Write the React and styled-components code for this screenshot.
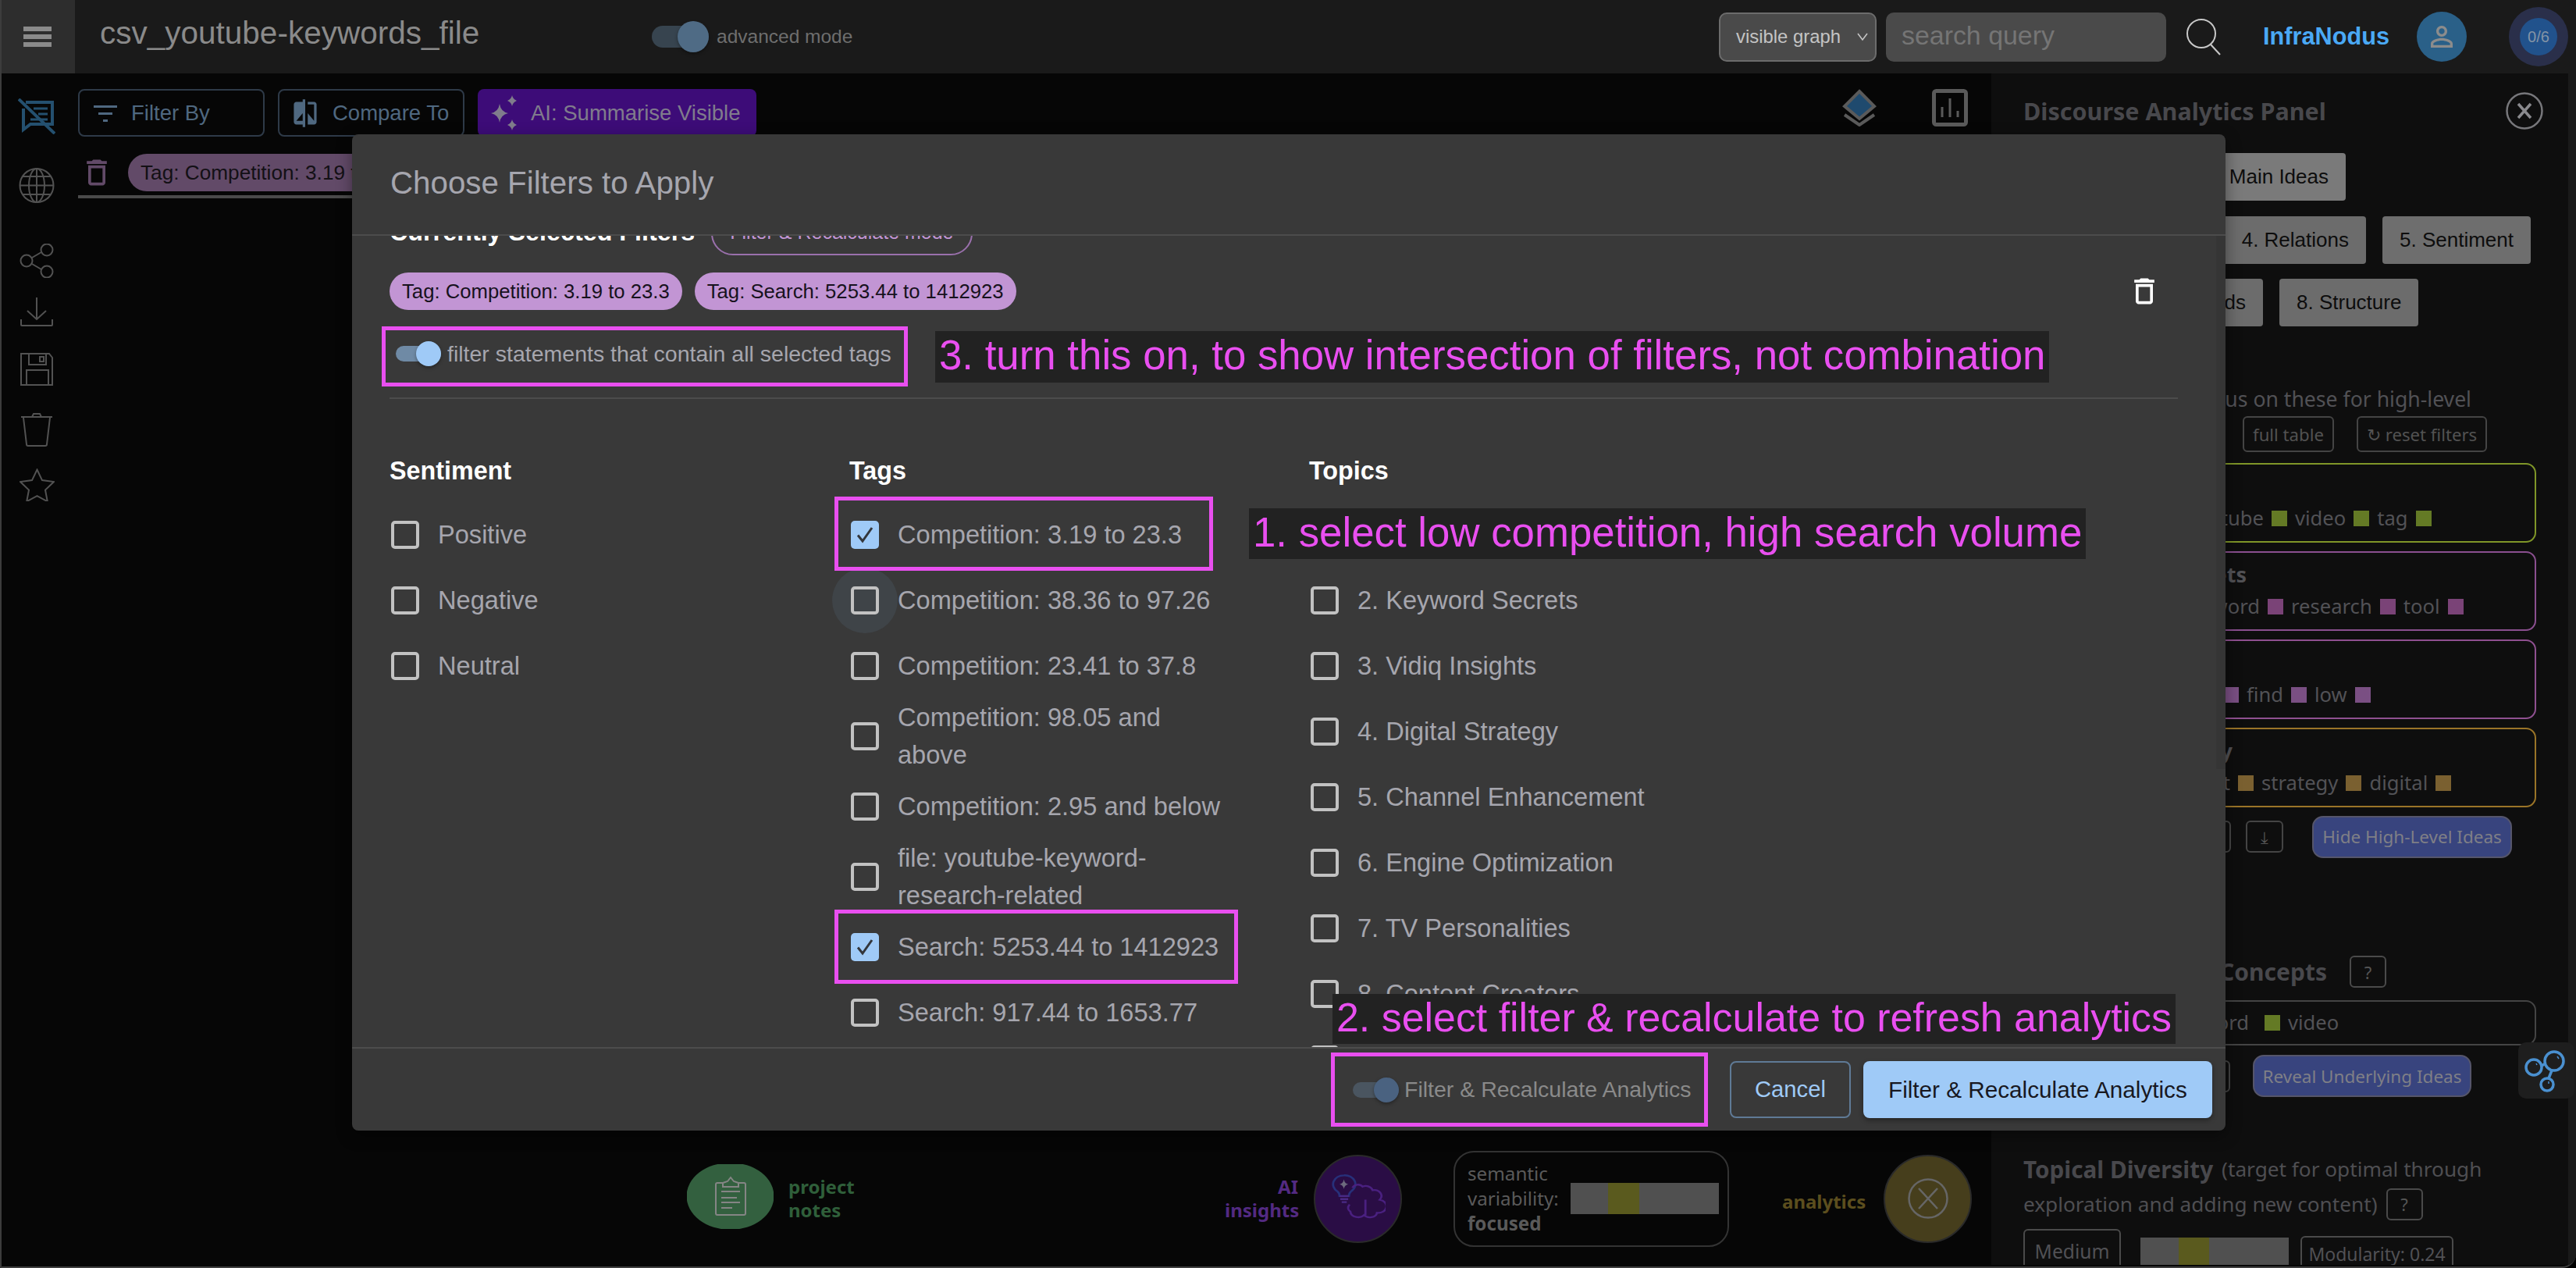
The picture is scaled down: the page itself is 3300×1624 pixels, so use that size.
import React from "react";
import styled, { createGlobalStyle } from "styled-components";

const Global = createGlobalStyle`
  html, body { margin: 0; padding: 0; background: #000; }
  * { box-sizing: border-box; }
`;

const SANS = `"Liberation Sans", Arial, sans-serif`;
const NOTO = `"Noto Sans", "Open Sans", sans-serif`;

const Root = styled.div`
  position: relative;
  width: 3300px;
  height: 1624px;
  overflow: hidden;
  background: #060606;
  border-left: 2px solid #3c3c3c;
  border-bottom: 2px solid #3f3f3f;
  border-bottom-right-radius: 18px;
  font-family: ${SANS};
`;

/* ---------- header ---------- */
const Header = styled.header`
  display: flex;
  align-items: center;
  height: 94px;
  background: #1a1a1a;
`;
const MenuCell = styled.div`
  display: flex;
  flex-direction: column;
  justify-content: center;
  gap: 4px;
  width: 94px;
  height: 94px;
  padding-left: 28px;
  background: #2d2d2d;
`;
const MenuBar = styled.span`
  display: block;
  width: 36px;
  height: 6px;
  background: #8a8a8a;
`;
const ProjectTitle = styled.div`
  margin: 0 0 10px 32px;
  width: 707px;
  font-size: 40.5px;
  line-height: 48px;
  color: #8a8a8a;
  white-space: nowrap;
`;
const Switch = styled.span`
  position: relative;
  display: inline-block;
  flex: none;
  width: ${p => p.$w}px;
  height: ${p => p.$h}px;
  border-radius: ${p => p.$h / 2}px;
  background: ${p => p.$track};
  &::after {
    content: "";
    position: absolute;
    right: 0;
    top: ${p => (p.$h - p.$size) / 2}px;
    width: ${p => p.$size}px;
    height: ${p => p.$size}px;
    border-radius: 50%;
    background: ${p => p.$thumb};
    box-shadow: 0 2px 4px rgba(0, 0, 0, 0.35);
  }
`;
const AdvancedLabel = styled.span`
  margin-left: 10px;
  font-size: 24.5px;
  color: #6e6e6e;
`;
const HeaderRight = styled.div`
  display: flex;
  align-items: center;
  margin-left: auto;
  padding-right: 10px;
`;
const GraphSelect = styled.div`
  display: flex;
  align-items: center;
  justify-content: space-between;
  width: 202px;
  height: 63px;
  padding: 0 8px 0 20px;
  border: 2px solid #6c6c6c;
  border-radius: 10px;
  background: #4a4a4a;
  font-size: 23.9px;
  color: #c4c4c4;
`;
const SearchBox = styled.div`
  display: flex;
  align-items: center;
  width: 359px;
  height: 63px;
  margin-left: 12px;
  padding: 0 0 4px 20px;
  border-radius: 10px;
  background: #4a4a4a;
  font-size: 33.9px;
  color: #757575;
`;
const SearchIcon = styled.svg`
  width: 46px;
  height: 48px;
  margin: 0 52px 0 26px;
`;
const Brand = styled.div`
  width: 197px;
  font-size: 30.7px;
  font-weight: 700;
  color: #4aa9f5;
`;
const UserBadge = styled.div`
  display: flex;
  align-items: center;
  justify-content: center;
  width: 64px;
  height: 64px;
  border-radius: 50%;
  background: #2a6088;
`;
const QuotaRing = styled.div`
  display: flex;
  align-items: center;
  justify-content: center;
  width: 76px;
  height: 76px;
  margin-left: 54px;
  border-radius: 50%;
  background: #2a2f4a;
`;
const QuotaDot = styled.div`
  display: flex;
  align-items: center;
  justify-content: center;
  width: 48px;
  height: 48px;
  border-radius: 50%;
  background: #21528c;
  font-size: 20px;
  color: #8494a6;
`;

/* ---------- page layout ---------- */
const Main = styled.main`
  display: flex;
  height: 1526px;
`;
const Rail = styled.nav`
  display: flex;
  flex-direction: column;
  align-items: center;
  flex: none;
  width: 90px;
  padding-top: 32px;
`;
const RailIcon = styled.svg`
  display: block;
  flex: none;
  width: ${p => p.$w}px;
  height: ${p => p.$h}px;
  margin-top: ${p => p.$mt}px;
  fill: none;
  stroke: ${p => p.$stroke || "#525252"};
  stroke-width: ${p => p.$sw || 2};
`;
const Center = styled.section`
  display: flex;
  flex-direction: column;
  flex: none;
  width: 2459px;
`;
const Toolbar = styled.div`
  display: flex;
  align-items: flex-start;
  padding: 20px 30px 0 8px;
  gap: 17px;
`;
const ToolButton = styled.div`
  display: flex;
  align-items: center;
  gap: 18px;
  width: ${p => p.$w}px;
  height: 61px;
  padding-left: ${p => p.$pad}px;
  border: 2px solid #2e3a48;
  border-radius: 8px;
  font-size: 27.5px;
  color: #4f6880;
`;
const AiButton = styled.div`
  display: flex;
  align-items: center;
  gap: 16px;
  width: 357px;
  height: 61px;
  padding-left: 16px;
  border-radius: 8px;
  background: #3d0c78;
  font-size: 27.5px;
  color: #807c8c;
`;
const ToolIcons = styled.div`
  display: flex;
  align-items: center;
  gap: 71px;
  margin-left: auto;
`;
const ChipRow = styled.div`
  display: flex;
  align-items: center;
  gap: 18px;
  height: 58px;
  margin: 21px 0 0 8px;
  padding: 0 0 4px 2px;
  border-bottom: 4px solid #4a4a4a;
`;
const DimChip = styled.span`
  display: flex;
  align-items: center;
  height: 48px;
  padding: 0 16px;
  border-radius: 24px;
  background: #624a68;
  font-size: 26.2px;
  color: #131015;
  white-space: nowrap;
`;
const Dock = styled.div`
  display: flex;
  align-items: center;
  height: 130px;
  margin-top: auto;
  margin-bottom: 20px;
  padding-left: 788px;
`;
const DockLabel = styled.div`
  width: ${p => p.$w}px;
  flex: none;
  margin-left: ${p => p.$ml || 0}px;
  margin-top: ${p => p.$mt || 0}px;
  font-family: ${NOTO};
  font-size: 24px;
  font-weight: 700;
  line-height: 30px;
  text-align: ${p => p.$align || "left"};
  color: ${p => p.$color};
`;
const NotesDisc = styled.div`
  display: flex;
  align-items: center;
  justify-content: center;
  flex: none;
  width: 111px;
  height: 83px;
  margin: 0 19px 6px 0;
  background: #33603f;
  clip-path: ellipse(56px 43px at center);
`;
const DockDisc = styled.div`
  display: flex;
  align-items: center;
  justify-content: center;
  flex: none;
  width: 113px;
  height: 113px;
  margin-left: ${p => p.$ml}px;
  border: 2px solid #2a2a2a;
  border-radius: 50%;
  background: ${p => p.$bg};
`;
const VariabilityCard = styled.div`
  display: flex;
  align-items: center;
  flex: none;
  width: 353px;
  height: 123px;
  margin: 0 68px 0 66px;
  padding: 0 11px 0 16px;
  border: 2px solid #333;
  border-radius: 26px;
`;
const VariabilityText = styled.div`
  width: 132px;
  flex: none;
  font-family: ${NOTO};
  font-size: 24.2px;
  line-height: 32px;
  color: #5a5a5a;
  & b { font-weight: 700; }
`;
const Meter = styled.div`
  display: flex;
  flex: none;
  width: 190px;
  height: 40px;
`;
const MeterSeg = styled.span`
  display: block;
  width: ${p => p.$w}px;
  background: ${p => p.$c};
`;

/* ---------- right panel ---------- */
const Panel = styled.aside`
  position: relative;
  flex: none;
  width: 739px;
  overflow: hidden;
  padding: 24px 0 0 41px;
  background: #0e0e0e;
  font-family: ${NOTO};
  color: #515155;
`;
const PanelEdge = styled.div`
  flex: 1;
  background: #1a1a1a;
`;
const PanelHead = styled.div`
  display: flex;
  align-items: center;
  justify-content: space-between;
  height: 48px;
  padding-right: 32px;
`;
const PanelTitle = styled.div`
  font-size: 30.5px;
  font-weight: 700;
  color: #48484c;
`;
const TabRow = styled.div`
  display: flex;
  gap: 21px;
  margin-top: ${p => p.$mt}px;
`;
const Tab = styled.div`
  display: flex;
  align-items: center;
  justify-content: flex-end;
  flex: none;
  width: ${p => (p.$w ? `${p.$w}px` : "auto")};
  height: 61px;
  padding: 0 22px;
  border-radius: 4px;
  background: ${p => p.$bg || "#6c6c6c"};
  font-family: ${SANS};
  font-size: 26px;
  color: #0d0d0d;
  white-space: nowrap;
`;
const IntroLine = styled.div`
  margin-top: 75px;
  height: 36px;
  font-size: 26.6px;
  line-height: 36px;
  text-align: right;
  width: 574px;
  white-space: nowrap;
`;
const SmallRow = styled.div`
  display: flex;
  gap: 29px;
  margin-top: 4px;
  padding-left: 281px;
`;
const SmallButton = styled.div`
  display: flex;
  align-items: center;
  height: 46px;
  padding: 0 11px;
  border: 2px solid #444;
  border-radius: 6px;
  font-size: 22.2px;
  color: #525252;
  white-space: nowrap;
`;
const Cards = styled.div`
  display: flex;
  flex-direction: column;
  gap: 11px;
  margin-top: 14px;
`;
const TopicCard = styled.div`
  width: 657px;
  height: 102px;
  padding: 10px 0 0 14px;
  border: 2px solid ${p => p.$c};
  border-radius: 13px;
`;
const TopicName = styled.div`
  width: ${p => p.$w}px;
  height: 41px;
  font-size: 27px;
  font-weight: 700;
  line-height: 36px;
  text-align: right;
  white-space: nowrap;
`;
const Words = styled.div`
  display: flex;
  align-items: center;
  gap: 10px;
  font-size: 25.6px;
  line-height: 36px;
  color: #525256;
`;
const LeadWord = styled.span`
  width: ${p => p.$w}px;
  flex: none;
  overflow: hidden;
  text-align: right;
  white-space: nowrap;
`;
const Sq = styled.span`
  display: block;
  flex: none;
  width: 20px;
  height: 20px;
  margin-left: ${p => p.$ml || 0}px;
  background: ${p => p.$c};
`;
const ActionRow = styled.div`
  display: flex;
  align-items: center;
  height: ${p => p.$h}px;
  margin-top: ${p => p.$mt}px;
`;
const Ghost = styled.div`
  display: flex;
  align-items: center;
  justify-content: center;
  flex: none;
  width: ${p => p.$w}px;
  height: 41px;
  margin-right: ${p => p.$mr}px;
  border: 2px solid #444;
  border-radius: 6px;
  font-size: 22px;
  color: #555;
`;
const RevealButton = styled.div`
  display: flex;
  align-items: center;
  justify-content: center;
  flex: none;
  width: ${p => p.$w}px;
  height: 54px;
  border: 2px solid #55556a;
  border-radius: 14px;
  background: #38447e;
  font-size: 22.5px;
  color: #7f7f86;
  white-space: nowrap;
`;
const ConceptHead = styled.div`
  display: flex;
  align-items: center;
  height: 41px;
  margin-top: 126px;
`;
const ConceptTitle = styled.div`
  width: 389px;
  margin-right: 29px;
  font-size: 30px;
  font-weight: 700;
  color: #48484c;
  white-space: nowrap;
  text-align: right;
`;
const HelpBox = styled.div`
  display: flex;
  align-items: center;
  justify-content: center;
  width: 47px;
  height: 41px;
  border: 2px solid #4a4a4a;
  border-radius: 6px;
  font-size: 22px;
  color: #555;
`;
const ConceptBox = styled.div`
  display: flex;
  align-items: center;
  width: 657px;
  height: 58px;
  margin-top: 16px;
  padding-left: 14px;
  border: 2px solid #444;
  border-radius: 13px;
`;
const Diversity = styled.div`
  margin-top: 70px;
  font-size: 26.2px;
  line-height: 45px;
  color: #4e4e52;
  white-space: nowrap;
`;
const DiversityLine = styled.div`
  display: flex;
  align-items: center;
  gap: 11px;
  & b { font-size: 29.7px; color: #48484c; }
`;
const MetricRow = styled.div`
  display: flex;
  align-items: flex-start;
  margin-top: 9px;
`;
const MediumTag = styled.div`
  width: 125px;
  height: 56px;
  margin-right: 25px;
  border: 2px solid #4a4a4a;
  border-radius: 6px;
  font-size: 24.6px;
  line-height: 54px;
  text-align: center;
`;
const PanelMeter = styled(Meter)`
  margin: 11px 15px 0 0;
`;
const ModularityTag = styled.div`
  width: 196px;
  height: 50px;
  margin-top: 9px;
  border: 2px solid #4a4a4a;
  border-radius: 6px;
  font-size: 23px;
  line-height: 42px;
  text-align: center;
  white-space: nowrap;
`;
const FloatButton = styled.div`
  position: absolute;
  left: 3224px;
  top: 1335px;
  display: flex;
  align-items: center;
  justify-content: center;
  width: 72px;
  height: 72px;
  border-radius: 10px;
  background: #1e1e1e;
`;

/* ---------- modal ---------- */
const Modal = styled.div`
  position: absolute;
  left: 449px;
  top: 172px;
  z-index: 2;
  display: flex;
  flex-direction: column;
  width: 2400px;
  height: 1276px;
  border-radius: 8px;
  background: #393939;
  box-shadow: 0 6px 20px rgba(0, 0, 0, 0.4);
`;
const ModalHead = styled.div`
  display: flex;
  align-items: center;
  flex: none;
  height: 130px;
  padding: 0 0 2px 49px;
  border-bottom: 2px solid #4c4c4c;
  font-size: 40.3px;
  color: #a6a6ae;
`;
const ModalBody = styled.div`
  position: relative;
  flex: 1;
  overflow: hidden;
  padding: 0 61px 0 48px;
`;
const ScrollThumb = styled.div`
  position: absolute;
  right: 0;
  top: 0;
  width: 12px;
  height: 683px;
  background: #353535;
`;
const SelectedHead = styled.div`
  display: flex;
  align-items: center;
  gap: 21px;
  height: 60px;
  margin-top: -35px;
`;
const SelectedTitle = styled.div`
  font-size: 32.3px;
  font-weight: 700;
  color: #fff;
`;
const ModePill = styled.div`
  display: flex;
  align-items: center;
  height: 60px;
  padding: 0 22px;
  border: 2px solid #9a70ac;
  border-radius: 28px;
  font-size: 25px;
  color: #c295d4;
`;
const SelectedChips = styled.div`
  position: relative;
  display: flex;
  gap: 16px;
  margin-top: 22px;
`;
const FilterChip = styled.span`
  display: flex;
  align-items: center;
  height: 48px;
  padding: 0 16px;
  border-radius: 24px;
  background: #c295d4;
  font-size: 25.7px;
  color: #17121d;
  white-space: nowrap;
`;
const ClearIcon = styled.svg`
  position: absolute;
  left: 2226px;
  top: 2px;
  width: 44px;
  height: 44px;
  fill: #fff;
`;
const AllTagsRow = styled.div`
  display: flex;
  align-items: center;
  gap: 8px;
  height: 32px;
  margin-top: 40px;
  padding-left: 8px;
  font-size: 28.5px;
  color: #a6a6ae;
  white-space: nowrap;
`;
const Rule = styled.div`
  height: 2px;
  margin-top: 40px;
  background: #4c4c4c;
`;
const Columns = styled.div`
  display: grid;
  grid-template-columns: 589px 589px 589px;
  margin-top: 72px;
`;
const ColTitle = styled.div`
  height: 40px;
  margin-bottom: 20px;
  font-size: 32.3px;
  font-weight: 700;
  line-height: 40px;
  color: #fff;
`;
const Option = styled.div`
  display: flex;
  align-items: center;
  gap: 24px;
  min-height: 84px;
  padding-left: 2px;
  font-size: 32.6px;
  line-height: 48px;
  color: #a6a6ae;
`;
const OptionText = styled.span`
  width: 428px;
`;
const Box = styled.span`
  position: relative;
  display: flex;
  align-items: center;
  justify-content: center;
  flex: none;
  width: 36px;
  height: 36px;
  border: ${p => (p.$on ? "none" : "4px solid #c2c2c2")};
  border-radius: 5px;
  background: ${p => (p.$on ? "#9fcaf7" : "transparent")};
  ${p =>
    p.$hover &&
    `&::before {
      content: "";
      position: absolute;
      left: -28px;
      top: -28px;
      width: 84px;
      height: 84px;
      border-radius: 50%;
      background: #3f4448;
      z-index: -1;
    }`}
`;
const ModalFoot = styled.div`
  display: flex;
  align-items: center;
  flex: none;
  height: 107px;
  padding: 0 17px 0 1282px;
  border-top: 2px solid #4c4c4c;
`;
const FootToggle = styled.div`
  display: flex;
  align-items: center;
  gap: 7px;
  width: 484px;
  font-size: 28.5px;
  color: #8a8a8a;
  white-space: nowrap;
`;
const CancelButton = styled.div`
  display: flex;
  align-items: center;
  justify-content: center;
  width: 155px;
  height: 73px;
  border: 2px solid #5f7a96;
  border-radius: 8px;
  font-size: 29.2px;
  color: #9fcaf7;
`;
const ApplyButton = styled.div`
  display: flex;
  align-items: center;
  justify-content: center;
  width: 448px;
  height: 73px;
  margin-left: 16px;
  border-radius: 8px;
  background: #9fcaf7;
  box-shadow: 0 3px 6px rgba(0, 0, 0, 0.35);
  font-size: 29.7px;
  color: #18181f;
  white-space: nowrap;
`;

/* ---------- annotations drawn over the screenshot ---------- */
const Frame = styled.div`
  position: absolute;
  left: ${p => p.$x}px;
  top: ${p => p.$y}px;
  width: ${p => p.$w}px;
  height: ${p => p.$h}px;
  z-index: 3;
  border: 5px solid #e94ff0;
  pointer-events: none;
`;
const Note = styled.div`
  position: absolute;
  left: ${p => p.$x}px;
  top: ${p => p.$y}px;
  z-index: 3;
  height: ${p => p.$h}px;
  padding: 0 5px;
  background: #222;
  font-size: ${p => p.$fs}px;
  line-height: ${p => p.$h - 4}px;
  color: #e94ff0;
  white-space: nowrap;
`;

/* ---------- icons ---------- */
const Check = () => (
  <svg width="24" height="24" viewBox="0 0 24 24" fill="none" stroke="#33363b" strokeWidth="3">
    <path d="M3 12.500l6 7.500L21 3" />
  </svg>
);
const Trash = ({ size, color }) => (
  <svg width={size} height={size} viewBox="0 0 24 24" fill={color} style={{ flex: "none" }}>
    <path d="M6 19c0 1.100.9 2 2 2h8c1.100 0 2-.9 2-2V7H6v12zM8 9h8v10H8V9zm7.500-5l-1-1h-5l-1 1H5v2h14V4z" />
  </svg>
);

const tagOptions = [
  { t: "Competition: 3.19 to 23.3", on: true },
  { t: "Competition: 38.36 to 97.26", hover: true },
  { t: "Competition: 23.41 to 37.8" },
  { t: "Competition: 98.05 and above" },
  { t: "Competition: 2.95 and below" },
  { t: "file: youtube-keyword-research-related" },
  { t: "Search: 5253.44 to 1412923", on: true },
  { t: "Search: 917.44 to 1653.77" },
];
const topicOptions = [
  "",
  "2. Keyword Secrets",
  "3. Vidiq Insights",
  "4. Digital Strategy",
  "5. Channel Enhancement",
  "6. Engine Optimization",
  "7. TV Personalities",
  "8. Content Creators",
  " ",
];
const OptionRow = ({ t, on, hover }) => (
  <Option>
    <Box $on={on} $hover={hover}>{on && <Check />}</Box>
    <OptionText>{t}</OptionText>
  </Option>
);

const App = () => (
  <Root>
    <Global />
    <Header>
      <MenuCell>
        <MenuBar />
        <MenuBar />
        <MenuBar />
      </MenuCell>
      <ProjectTitle>csv_youtube-keywords_file</ProjectTitle>
      <Switch $w={73} $h={28} $size={40} $track="#37444f" $thumb="#4f6b85" />
      <AdvancedLabel>advanced mode</AdvancedLabel>
      <HeaderRight>
        <GraphSelect>
          visible graph
          <svg width="16" height="12" viewBox="0 0 16 12" fill="none" stroke="#c4c4c4" strokeWidth="1.600">
            <path d="M2 2l6 8 6-8" />
          </svg>
        </GraphSelect>
        <SearchBox>search query</SearchBox>
        <SearchIcon viewBox="0 0 46 48" fill="none" stroke="#c8c8c8" strokeWidth="2">
          <circle cx="19" cy="20" r="18" />
          <path d="M31 34l12 13" />
        </SearchIcon>
        <Brand>InfraNodus</Brand>
        <UserBadge>
          <svg width="42" height="42" viewBox="0 0 24 24" fill="#8c8c8c">
            <path d="M12 5.900c1.160 0 2.100.94 2.100 2.100s-.94 2.100-2.100 2.100S9.900 9.160 9.900 8s.94-2.100 2.100-2.100m0 9c2.970 0 6.100 1.460 6.100 2.100v1.100H5.900V17c0-.64 3.130-2.100 6.100-2.100M12 4C9.790 4 8 5.790 8 8s1.790 4 4 4 4-1.790 4-4-1.790-4-4-4zm0 9c-2.670 0-8 1.340-8 4v3h16v-3c0-2.660-5.330-4-8-4z" />
          </svg>
        </UserBadge>
        <QuotaRing>
          <QuotaDot>0/6</QuotaDot>
        </QuotaRing>
      </HeaderRight>
    </Header>

    <Main>
      <Rail>
        <RailIcon $w={48} $h={46} $mt={0} $stroke="#24506f" $sw={4} viewBox="0 0 48 46">
          <path d="M10 5h34v28H16l-9 7V13" />
          <path d="M20 13h18M26 20h12M16 27h22" strokeWidth="3" />
          <path d="M1 1l46 44" />
        </RailIcon>
        <RailIcon $w={46} $h={45} $mt={43} viewBox="0 0 46 45">
          <circle cx="23" cy="22.500" r="21.500" />
          <ellipse cx="23" cy="22.500" rx="10" ry="21.500" />
          <path d="M23 1v43M2 22.500h42M5 11h36M5 34h36" />
        </RailIcon>
        <RailIcon $w={44} $h={44} $mt={52} viewBox="0 0 44 44">
          <circle cx="35" cy="8" r="7.500" />
          <circle cx="9" cy="22" r="7.500" />
          <circle cx="35" cy="36" r="7.500" />
          <path d="M16 18l12-7M16 26l12 7" />
        </RailIcon>
        <RailIcon $w={42} $h={38} $mt={24} viewBox="0 0 42 38">
          <path d="M21 1v28M9 18l12 11 12-11" />
          <path d="M1 29v7a1 1 0 0 0 1 1h38a1 1 0 0 0 1-1v-7" />
        </RailIcon>
        <RailIcon $w={42} $h={42} $mt={34} viewBox="0 0 42 42">
          <path d="M1 1h36l4 5v35H1z" />
          <path d="M11 1v14h22V1M8 41V22h28v19M25 5h5v6h-5z" />
        </RailIcon>
        <RailIcon $w={40} $h={44} $mt={34} viewBox="0 0 40 44">
          <path d="M0 6h40M14 6l2-4h8l2 4" />
          <path d="M3 7l4 34a2 2 0 0 0 2 2h22a2 2 0 0 0 2-2l4-34" />
        </RailIcon>
        <RailIcon $w={45} $h={42} $mt={28} viewBox="0 0 45 42">
          <path d="M22.500 1.500l6.500 13.600 15 2-11 10.400 2.800 14.800-13.300-7.200-13.300 7.200 2.800-14.800-11-10.400 15-2z" />
        </RailIcon>
      </Rail>

      <Center>
        <Toolbar>
          <ToolButton $w={239} $pad={18}>
            <svg width="30" height="24" viewBox="0 0 30 24" fill="#4f6880">
              <path d="M0 2h30v3H0zM6 11h18v3H6zM12 20h6v3h-6z" />
            </svg>
            Filter By
          </ToolButton>
          <ToolButton $w={239} $pad={16}>
            <svg width="34" height="40" viewBox="1.500 0 21 24" fill="#4f6880">
              <path d="M10 3H5c-1.100 0-2 .9-2 2v14c0 1.100.9 2 2 2h5v2h2V1h-2v2zm0 15H5l5-6v6zm9-15h-5v2h5v13l-5-6v9h5c1.100 0 2-.9 2-2V5c0-1.100-.9-2-2-2z" />
            </svg>
            Compare To
          </ToolButton>
          <AiButton>
            <svg width="36" height="46" viewBox="0 0 36 46" fill="#807c8c">
              <path d="M12 11q1.500 10 11 12-9.500 2-11 12-1.500-10-11-12 9.500-2 11-12zM28 0q1 5 6 7-5 2-6 7-1-5-6-7 5-2 6-7zM28 31q1 5 6 7-5 2-6 7-1-5-6-7 5-2 6-7z" />
            </svg>
            AI: Summarise Visible
          </AiButton>
          <ToolIcons>
            <svg width="44" height="48" viewBox="0 0 44 48" fill="none">
              <path d="M22 3l19 19-19 16L3 22z" fill="#1f4a6e" stroke="#5a5a5a" strokeWidth="4" />
              <path d="M3 33l19 13 19-13" stroke="#5a5a5a" strokeWidth="4" />
            </svg>
            <svg width="46" height="48" viewBox="0 0 46 48" fill="none" stroke="#5a5a5a">
              <rect x="2.500" y="2.500" width="41" height="43" rx="3" strokeWidth="5" />
              <path d="M13 36V23M23 36V12M33 36v-8" strokeWidth="3" />
            </svg>
          </ToolIcons>
        </Toolbar>
        <ChipRow>
          <Trash size={44} color="#624a68" />
          <DimChip>Tag: Competition: 3.19 to 23.3</DimChip>
        </ChipRow>
        <Dock>
          <NotesDisc>
            <svg width="42" height="52" viewBox="0 0 42 52" fill="none" stroke="#858585" strokeWidth="2">
              <path d="M11 9H4a2 2 0 0 0-2 2v37a2 2 0 0 0 2 2h34a2 2 0 0 0 2-2V11a2 2 0 0 0-2-2h-7" />
              <path d="M11 14h20V9l-6-2-4-5-4 5-6 2z" />
              <path d="M9 20h24M9 28h20M9 34h24M9 41h14" />
            </svg>
          </NotesDisc>
          <DockLabel $w={86} $color="#2f5f3a">
            project
            <br />
            notes
          </DockLabel>
          <DockLabel $w={94} $ml={473} $align="right" $color="#532a82">
            AI
            <br />
            insights
          </DockLabel>
          <DockDisc $ml={20} $bg="#2a0d45">
            <svg width="70" height="64" viewBox="0 0 76 84" preserveAspectRatio="none" fill="none" strokeWidth="3">
              <path d="M18 3a15 15 0 0 1 10 27c-2 2-3 5-3 8H12c0-3-1-6-3-8A15 15 0 0 1 18 3z" stroke="#27307a" />
              <path d="M12 38h13M13 43h11M15 48h7" stroke="#4a2a86" />
              <path d="M18 10q1 7 6 8-5 1-6 8-1-7-6-8 5-1 6-8z" fill="#6d6a7e" />
              <path d="M30 24a8 8 0 0 1 14-2 10 10 0 0 1 14 6 10 10 0 0 1 10 16 11 11 0 0 1-4 22c-1 8-13 10-18 4-5 6-18 4-19-6-4-3-4-8-1-12M48 44v26" stroke="#4a2080" />
            </svg>
          </DockDisc>
          <VariabilityCard>
            <VariabilityText>
              semantic
              <br />
              variability:
              <br />
              <b>focused</b>
            </VariabilityText>
            <Meter>
              <MeterSeg $w={48} $c="#505050" />
              <MeterSeg $w={40} $c="#5a5a1e" />
              <MeterSeg $w={102} $c="#505050" />
            </Meter>
          </VariabilityCard>
          <DockLabel $w={107} $mt={8} $color="#5c4e1e">analytics</DockLabel>
          <DockDisc $ml={23} $bg="#463e1c">
            <svg width="52" height="52" viewBox="0 0 52 52" fill="none" stroke="#666" strokeWidth="2.500">
              <circle cx="26" cy="26" r="24.500" />
              <path d="M14 13l24 26M38 13L14 39" />
            </svg>
          </DockDisc>
        </Dock>
      </Center>

      <Panel>
        <PanelHead>
          <PanelTitle>Discourse Analytics Panel</PanelTitle>
          <svg width="48" height="48" viewBox="0 0 48 48" fill="none" stroke="#77777b" strokeWidth="2.500">
            <circle cx="24" cy="24" r="22.500" />
            <path d="M16 15l16 18M32 15L16 33" strokeWidth="3.500" stroke="#8a8a8e" />
          </svg>
        </PanelHead>
        <TabRow $mt={30}>
          <Tab $w={413} $bg="#7a7a7a">Main Ideas</Tab>
        </TabRow>
        <TabRow $mt={20}>
          <Tab $w={439}>4. Relations</Tab>
          <Tab $bg="#6e6e6e">5. Sentiment</Tab>
        </TabRow>
        <TabRow $mt={19}>
          <Tab $w={307}>7. Keywords</Tab>
          <Tab>8. Structure</Tab>
        </TabRow>
        <IntroLine>Topics: focus on these for high-level</IntroLine>
        <SmallRow>
          <SmallButton>full table</SmallButton>
          <SmallButton>↻ reset filters</SmallButton>
        </SmallRow>
        <Cards>
          <TopicCard $c="#7f9628">
            <TopicName $w={200} />
            <Words>
              <LeadWord $w={292}>youtube</LeadWord>
              <Sq $c="#647a25" />
              video
              <Sq $c="#647a25" />
              tag
              <Sq $c="#647a25" />
            </Words>
          </TopicCard>
          <TopicCard $c="#8a4f8f">
            <TopicName $w={270}>2. Keyword Secrets</TopicName>
            <Words>
              <LeadWord $w={287}>keyword</LeadWord>
              <Sq $c="#7a4377" />
              research
              <Sq $c="#7a4377" />
              tool
              <Sq $c="#7a4377" />
            </Words>
          </TopicCard>
          <TopicCard $c="#8f5090">
            <TopicName $w={200} />
            <Words>
              <LeadWord $w={230}>vidiq</LeadWord>
              <Sq $c="#7a4f83" />
              find
              <Sq $c="#7a4f83" />
              low
              <Sq $c="#7a4f83" />
            </Words>
          </TopicCard>
          <TopicCard $c="#9a7428">
            <TopicName $w={252}>4. Digital Strategy</TopicName>
            <Words>
              <LeadWord $w={249}>content</LeadWord>
              <Sq $c="#7a6030" />
              strategy
              <Sq $c="#7a6030" />
              digital
              <Sq $c="#7a6030" />
            </Words>
          </TopicCard>
        </Cards>
        <ActionRow $h={53} $mt={11}>
          <Ghost $w={266} $mr={19} />
          <Ghost $w={48} $mr={37}>⤓</Ghost>
          <RevealButton $w={256}>Hide High-Level Ideas</RevealButton>
        </ActionRow>
        <ConceptHead>
          <ConceptTitle>Main Concepts</ConceptTitle>
          <HelpBox>?</HelpBox>
        </ConceptHead>
        <ConceptBox>
          <Words>
            <LeadWord $w={273}>keyword</LeadWord>
            <Sq $c="#647a25" $ml={10} />
            video
          </Words>
        </ConceptBox>
        <ActionRow $h={54} $mt={12}>
          <Ghost $w={265} $mr={29} />
          <RevealButton $w={280}>Reveal Underlying Ideas</RevealButton>
        </ActionRow>
        <Diversity>
          <DiversityLine>
            <b>Topical Diversity</b> (target for optimal through
          </DiversityLine>
          <DiversityLine>
            exploration and adding new content)
            <HelpBox>?</HelpBox>
          </DiversityLine>
        </Diversity>
        <MetricRow>
          <MediumTag>Medium</MediumTag>
          <PanelMeter>
            <MeterSeg $w={49} $c="#505050" />
            <MeterSeg $w={39} $c="#5a5a1e" />
            <MeterSeg $w={102} $c="#505050" />
          </PanelMeter>
          <ModularityTag>Modularity: 0.24</ModularityTag>
        </MetricRow>
      </Panel>
      <PanelEdge />
    </Main>

    <FloatButton>
      <svg width="56" height="56" viewBox="0 0 56 56" fill="none" stroke="#4a90d0" strokeWidth="3.500">
        <circle cx="12" cy="24" r="10" />
        <circle cx="38" cy="16" r="12" />
        <circle cx="29" cy="46" r="8" />
        <path d="M22 22l5-3M35 28l-4 10" />
        <path d="M42 10l2 3M15 19l1 2M31 42l0 3" strokeWidth="1.500" />
      </svg>
    </FloatButton>

    <Modal>
      <ModalHead>Choose Filters to Apply</ModalHead>
      <ModalBody>
        <ScrollThumb />
        <SelectedHead>
          <SelectedTitle>Currently Selected Filters</SelectedTitle>
          <ModePill>Filter &amp; Recalculate mode</ModePill>
        </SelectedHead>
        <SelectedChips>
          <FilterChip>Tag: Competition: 3.19 to 23.3</FilterChip>
          <FilterChip>Tag: Search: 5253.44 to 1412923</FilterChip>
          <ClearIcon viewBox="0 0 24 24">
            <path d="M6 19c0 1.100.9 2 2 2h8c1.100 0 2-.9 2-2V7H6v12zM8 9h8v10H8V9zm7.500-5l-1-1h-5l-1 1H5v2h14V4z" />
          </ClearIcon>
        </SelectedChips>
        <AllTagsRow>
          <Switch $w={58} $h={20} $size={32} $track="#6f8aa5" $thumb="#9fcaf7" />
          filter statements that contain all selected tags
        </AllTagsRow>
        <Rule />
        <Columns>
          <div>
            <ColTitle>Sentiment</ColTitle>
            <OptionRow t="Positive" />
            <OptionRow t="Negative" />
            <OptionRow t="Neutral" />
          </div>
          <div>
            <ColTitle>Tags</ColTitle>
            {tagOptions.map(o => (
              <OptionRow key={o.t} {...o} />
            ))}
          </div>
          <div>
            <ColTitle>Topics</ColTitle>
            {topicOptions.map(t => (
              <OptionRow key={t} t={t} />
            ))}
          </div>
        </Columns>
      </ModalBody>
      <ModalFoot>
        <FootToggle>
          <Switch $w={59} $h={20} $size={32} $track="#4a5560" $thumb="#4a6280" />
          Filter &amp; Recalculate Analytics
        </FootToggle>
        <CancelButton>Cancel</CancelButton>
        <ApplyButton>Filter &amp; Recalculate Analytics</ApplyButton>
      </ModalFoot>
    </Modal>

    <Frame $x={487} $y={418} $w={674} $h={77} />
    <Frame $x={1067} $y={636} $w={485} $h={95} />
    <Frame $x={1067} $y={1165} $w={517} $h={95} />
    <Frame $x={1703} $y={1348} $w={483} $h={95} />
    <Note $x={1196} $y={424} $h={66} $fs={52.8}>3. turn this on, to show intersection of filters, not combination</Note>
    <Note $x={1598} $y={651} $h={65} $fs={52.8}>1. select low competition, high search volume</Note>
    <Note $x={1705} $y={1273} $h={64} $fs={51.9}>2. select filter &amp; recalculate to refresh analytics</Note>
  </Root>
);

export default App;
